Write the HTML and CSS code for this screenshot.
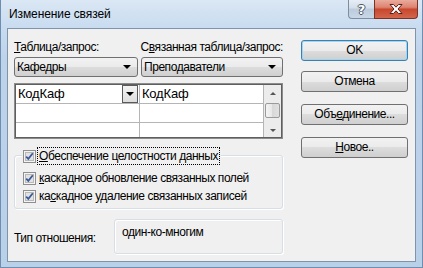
FILE: index.html
```html
<!DOCTYPE html>
<html lang="ru">
<head>
<meta charset="utf-8">
<title>Изменение связей</title>
<link rel="stylesheet" href="styles.css">
</head>
<body>
<div class="window">
  <div class="titlebar">
    <span class="title">Изменение связей</span>
    <div class="caption">
      <div class="cbtn help">?</div>
      <div class="cbtn close">
        <svg width="16" height="12" viewBox="0 0 16 12"><path d="M2 1.5 H5.5 L8 4.2 L10.5 1.5 H14 L10 6 L14 10.5 H10.5 L8 7.8 L5.5 10.5 H2 L6 6 Z" fill="#fff" stroke="#5a1e15" stroke-width="1" stroke-linejoin="round"/></svg>
      </div>
    </div>
  </div>
  <div class="client">
    <div class="leftcol">
      <div class="labels">
        <span class="lbl lbl1"><u>Т</u>аблица/запрос:</span>
        <span class="lbl lbl2">С<u>в</u>язанная таблица/запрос:</span>
      </div>
      <div class="combos">
        <div class="combo combo1"><span>Кафедры</span><i class="tri"></i></div>
        <div class="combo combo2"><span>Преподаватели</span><i class="tri"></i></div>
      </div>
      <div class="grid">
        <div class="cell c1 hdr"><span>КодКаф</span><div class="cellbtn"><i class="tri"></i></div></div>
        <div class="cell c2 hdr"><span>КодКаф</span></div>
        <div class="sbar">
          <i class="sarrow up"></i>
          <div class="thumb"></div>
          <i class="sarrow down"></i>
        </div>
        <div class="cell c1"></div>
        <div class="cell c2"></div>
        <div class="cell c1 last"></div>
        <div class="cell c2 last"></div>
      </div>
      <div class="group">
        <div class="chk first">
          <svg class="box" width="13" height="13" viewBox="0 0 13 13"><rect x="0.5" y="0.5" width="12" height="12" fill="#f4f4f4" stroke="#8e8f8f"/><rect x="2.5" y="2.5" width="8" height="8" fill="#e2e2e2" stroke="#b9b9b9"/><path d="M3.2 6.6 L5.3 8.8 L9.8 3.2" fill="none" stroke="#3a5a9a" stroke-width="1.8"/></svg>
          <span class="focus"><u>О</u>беспечение целостности данных</span>
        </div>
        <div class="chk second">
          <svg class="box" width="13" height="13" viewBox="0 0 13 13"><rect x="0.5" y="0.5" width="12" height="12" fill="#f4f4f4" stroke="#8e8f8f"/><rect x="2.5" y="2.5" width="8" height="8" fill="#e2e2e2" stroke="#b9b9b9"/><path d="M3.2 6.6 L5.3 8.8 L9.8 3.2" fill="none" stroke="#3a5a9a" stroke-width="1.8"/></svg>
          <span class="txt"><u>к</u>аскадное обновление связанных полей</span>
        </div>
        <div class="chk third">
          <svg class="box" width="13" height="13" viewBox="0 0 13 13"><rect x="0.5" y="0.5" width="12" height="12" fill="#f4f4f4" stroke="#8e8f8f"/><rect x="2.5" y="2.5" width="8" height="8" fill="#e2e2e2" stroke="#b9b9b9"/><path d="M3.2 6.6 L5.3 8.8 L9.8 3.2" fill="none" stroke="#3a5a9a" stroke-width="1.8"/></svg>
          <span class="txt">ка<u>с</u>кадное удаление связанных записей</span>
        </div>
      </div>
      <div class="reltype">
        <span class="rlabel">Тип отношения:</span>
        <div class="rbox">один-ко-многим</div>
      </div>
    </div>
    <div class="rightcol">
      <div class="btn default">OK</div>
      <div class="btn b2">Отмена</div>
      <div class="btn b3">Объ<u>е</u>динение...</div>
      <div class="btn b4"><u>Н</u>овое..</div>
    </div>
  </div>
</div>
</body>
</html>
```

FILE: styles.css
```css
* { box-sizing: border-box; }
html, body { margin: 0; padding: 0; }
body {
  font-family: "Liberation Sans", Arial, sans-serif;
  font-size: 12px;
  letter-spacing: -0.45px;
  color: #000;
  background: #fff;
  white-space: nowrap;
}
u { text-decoration: underline; text-underline-offset: 1px; }

.window {
  width: 423px;
  height: 268px;
  display: flex;
  flex-direction: column;
  background: linear-gradient(#dbe7f4 0, #c9dcf0 26px, #bdd3ea 60px, #b9d0e9 100%);
  border: 1px solid #6f8db0;
  border-top: none;
  padding: 0 6px 5px 6px;
}

.titlebar {
  height: 28px;
  flex-shrink: 0;
  display: flex;
  justify-content: space-between;
  align-items: flex-start;
}
.title {
  padding: 6px 0 0 2px;
  line-height: 16px;
  font-size: 12px;
  letter-spacing: -0.1px;
}
.caption { display: flex; margin-right: -2px; }
.cbtn {
  height: 19px;
  display: flex;
  align-items: center;
  justify-content: center;
}
.help {
  width: 26px;
  border: 1px solid #7d8ea3;
  border-top: none;
  border-right: none;
  border-radius: 0 0 0 4px;
  background: linear-gradient(#e6edf5, #d3dee9 45%, #bccbdc 50%, #c9d7e6);
  color: #fff;
  font-family: "DejaVu Sans", sans-serif;
  font-weight: bold;
  font-size: 13px;
  letter-spacing: 0;
  line-height: 17px;
  text-shadow: 1px 0 0 #4b5563, -1px 0 0 #4b5563, 0 1px 0 #4b5563, 0 -1px 0 #4b5563;
}
.close {
  width: 44px;
  border: 1px solid #7a3326;
  border-top: none;
  border-radius: 0 0 4px 0;
  background: linear-gradient(#e9ab9d, #dd8470 40%, #c8482e 52%, #d2664c);
}

.client {
  flex: 1;
  display: flex;
  border: 1px solid #7f93aa;
  background: #f0f0f0;
  padding: 9px 0 0 6px;
}

.leftcol {
  width: 269px;
  display: flex;
  flex-direction: column;
}

.labels { display: flex; height: 19px; line-height: 16px; padding-top: 1px; }
.lbl1 { width: 127px; }

.combos { display: flex; gap: 3px; }
.combo {
  height: 20px;
  border: 1px solid #707070;
  border-radius: 3px;
  background: linear-gradient(#f2f2f2, #ebebeb 50%, #dddddd 50%, #cfcfcf);
  display: flex;
  align-items: center;
  justify-content: space-between;
  padding: 0 6px 0 2px;
  line-height: 16px;
}
.combo1 { width: 124px; }
.combo2 { width: 142px; }
.tri {
  display: block;
  width: 0;
  height: 0;
  border-left: 4px solid transparent;
  border-right: 4px solid transparent;
  border-top: 4px solid #000;
}

.grid {
  margin-top: 6px;
  height: 56px;
  border: 1px solid #8c8c8c;
  box-shadow: inset 0 0 0 1px #5f5f5f;
  padding: 1px;
  background: #fff;
  display: grid;
  grid-template-columns: 124px 124px 17px;
  grid-template-rows: 19px 19px 14px;
}
.cell {
  border-right: 1px solid #b5b5b5;
  border-bottom: 1px solid #b5b5b5;
}
.cell.last { border-bottom: none; }
.hdr {
  font-size: 13px;
  letter-spacing: -0.2px;
  line-height: 18px;
  padding-left: 2px;
  display: flex;
  justify-content: space-between;
  align-items: flex-start;
}
.cellbtn {
  width: 16px;
  height: 18px;
  margin: 0 1px 0 0;
  border: 1px solid #5a5a5a;
  background: linear-gradient(#f3f3f3, #dedede);
  display: flex;
  align-items: center;
  justify-content: center;
}
.sbar {
  grid-row: 1 / span 3;
  grid-column: 3;
  background: #ececec;
  display: flex;
  flex-direction: column;
  align-items: center;
}
.sarrow {
  display: block;
  width: 0; height: 0;
  border-left: 3px solid transparent;
  border-right: 3px solid transparent;
}
.sarrow.up { border-bottom: 3px solid #555; margin-top: 7px; }
.sarrow.down { border-top: 3px solid #555; margin-top: 11px; }
.thumb {
  width: 15px;
  height: 15px;
  margin-top: 8px;
  border: 1px solid #9a9a9a;
  border-radius: 2px;
  background: linear-gradient(90deg, #f4f4f4, #e6e6e6 50%, #d8d8d8 50%, #e0e0e0);
}

.group {
  margin-top: 16px;
  border: 1px solid #d5dfe5;
  border-radius: 3px;
  box-shadow: inset 1px 1px 0 #fff, 1px 1px 0 #fff;
  padding: 0 0 4px 7px;
}
.chk {
  display: flex;
  align-items: center;
  height: 16px;
  line-height: 16px;
  gap: 2px;
  padding-left: 1px;
}
.chk .box { flex-shrink: 0; }
.chk.first {
  margin-top: -8px;
  background: #f0f0f0;
  width: fit-content;
  padding-right: 2px;
}
.chk.second { margin-top: 6px; }
.chk.third { margin-top: 2px; }
.focus {
  outline: 1px dotted #000;
  outline-offset: 0;
  padding: 0 1px;
  height: 16px;
}
.txt { padding-left: 1px; }

.reltype {
  margin-top: 10px;
  display: flex;
  align-items: center;
}
.rlabel { width: 100px; line-height: 16px; padding-top: 2px; }
.rbox {
  width: 169px;
  height: 35px;
  border: 1px solid #d5dfe5;
  border-radius: 3px;
  box-shadow: inset 1px 1px 0 #fff, 1px 1px 0 #fff;
  padding: 4px 0 0 7px;
  line-height: 16px;
}

.rightcol {
  margin-left: 18px;
  width: 107px;
  display: flex;
  flex-direction: column;
  padding-top: 2px;
}
.btn {
  height: 21px;
  border: 1px solid #707070;
  border-radius: 3px;
  background: linear-gradient(#f2f2f2, #ebebeb 50%, #dddddd 50%, #cfcfcf);
  text-align: center;
  line-height: 19px;
}
.btn.default {
  border-color: #3c7fb1;
  box-shadow: inset 0 0 0 1px #9fd6f2;
}
.b2 { margin-top: 10px; }
.b3 { margin-top: 12px; }
.b4 { margin-top: 12px; }
```
